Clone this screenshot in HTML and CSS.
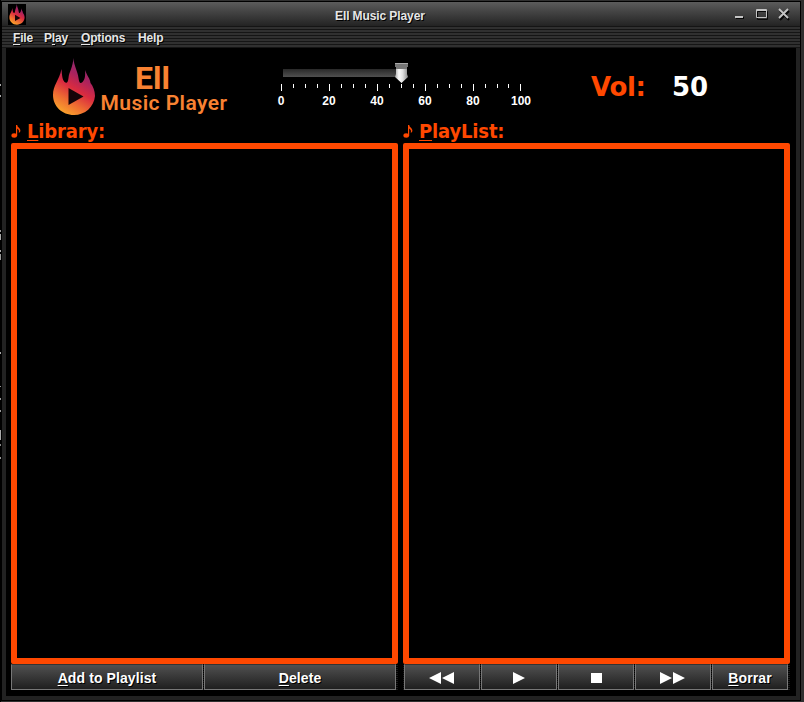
FILE: index.html
```
<!DOCTYPE html>
<html lang="en">
<head>
<meta charset="utf-8">
<title>Ell Music Player</title>
<link rel="stylesheet" href="styles.css">
</head>
<body>
<svg class="defs" width="0" height="0">
  <defs>
    <linearGradient id="fire" x1="0.72" y1="0" x2="0.28" y2="1">
      <stop offset="0" stop-color="#833078"/>
      <stop offset=".3" stop-color="#a8225f"/>
      <stop offset=".53" stop-color="#d92b40"/>
      <stop offset=".76" stop-color="#ee6b32"/>
      <stop offset="1" stop-color="#fba72b"/>
    </linearGradient>
    <symbol id="flame" viewBox="0 0 44 58">
      <path fill="url(#fire)" d="M21.400 0C22 8 26 14 26.500 20C27 24 28 26 30 24.500C33 22 33.500 18 33 12C35 18 38 20 38.500 25C41 28 43 33 43 38C42 49 33 57 22 57C10 57 1 48 1 37C1 27 7 23 9.500 11C10 16 10 21 12.500 24C15 26 16 24 16.500 20C17 14 21 9 21.400 0Z"/>
      <path fill="#160408" d="M16.500 30L31.500 38.500L16.500 47Z"/>
    </symbol>
  </defs>
</svg>
<div class="window">
  <header class="titlebar">
    <span class="app-icon"><svg width="16" height="21" preserveAspectRatio="none"><use href="#flame"/></svg></span>
    <h1 class="title">Ell Music Player</h1>
    <svg class="controls" width="58" height="14" fill="none">
      <g stroke="#080808" transform="translate(1 1)"><path stroke-width="2" d="M2 10h8"/><path d="M23.500 3.500h10v8h-10z"/><path stroke-width="2" d="M46 3l9 9M55 3l-9 9"/></g>
      <g stroke="#c4c4c4"><path stroke-width="2" d="M2 10h8"/><path d="M23.500 2.500h10v8h-10zM24 3.500h9"/><path stroke-width="1.800" d="M46 2l9 9M55 2l-9 9"/></g>
    </svg>
  </header>
  <nav class="menubar">
    <span class="m-file"><u>F</u>ile</span><span class="m-play">P<u>l</u>ay</span><span class="m-options"><u>O</u>ptions</span><span class="m-help">Help</span>
  </nav>
  <main class="content">
    <section class="top">
      <svg class="logo" width="44" height="58"><use href="#flame"/></svg>
      <div class="brand"><div class="brand-name">Ell</div><div class="brand-sub">Music Player</div></div>
      <div class="slider">
        <svg width="260" height="34">
          <defs>
            <linearGradient id="track" x2="0" y2="1"><stop stop-color="#292929"/><stop offset="1" stop-color="#505050"/></linearGradient>
            <linearGradient id="thumb"><stop stop-color="#aaa"/><stop offset=".3" stop-color="#fafafa"/><stop offset=".6" stop-color="#dedede"/><stop offset="1" stop-color="#888"/></linearGradient>
          </defs>
          <rect x="13" y="7" width="115" height="8" fill="url(#track)"/>
          <path fill="url(#thumb)" d="M126 5h11v7l1 3-6.500 6-6.500-6 1-3z"/>
          <path fill="#777" d="M125 1h13v4h-1v2h-11v-2h-1z"/><path stroke="#aaa" d="M125 1.500h13"/>
          <path stroke="#fff" d="M11.500 22v7M59.500 22v7M107.500 22v7M155.500 22v7M203.500 22v7M250.500 22v7M23.500 22v4M35.500 22v4M47.500 22v4M71.500 22v4M83.500 22v4M95.500 22v4M119.500 22v4M131.500 22v4M143.500 22v4M167.500 22v4M179.500 22v4M191.500 22v4M215.500 22v4M227.500 22v4M238.500 22v4"/>
        </svg>
        <div class="scale"><span>0</span><span>20</span><span>40</span><span>60</span><span>80</span><span>100</span></div>
      </div>
      <div class="volume"><span class="vol-label">Vol:</span><span class="vol-value">50</span></div>
    </section>
    <section class="panels">
      <div class="panel">
        <h2><svg class="note" width="16" height="18"><ellipse cx="3.200" cy="13.500" rx="2.800" ry="2.200"/><path d="M5 3h1.200q.2 2 2 3 2.200 2.500.4 4.500h-1q1.200-2.200-1.400-4v7.500h-1.200z"/></svg><span><u>L</u>ibrary:</span></h2>
        <div class="list"></div>
        <div class="buttons"><button><span><u>A</u>dd to Playlist</span></button><button><span><u>D</u>elete</span></button></div>
      </div>
      <div class="panel right">
        <h2><svg class="note" width="16" height="18"><ellipse cx="3.200" cy="13.500" rx="2.800" ry="2.200"/><path d="M5 3h1.200q.2 2 2 3 2.200 2.500.4 4.500h-1q1.200-2.200-1.400-4v7.500h-1.200z"/></svg><span><u>P</u>layList:</span></h2>
        <div class="list"></div>
        <div class="buttons">
          <button aria-label="Previous"><svg width="26" height="12"><path d="M0 6L12 0v12zM13 6L25 0v12z"/></svg></button>
          <button aria-label="Play"><svg width="12" height="12"><path d="M0 0l12 6-12 6z"/></svg></button>
          <button aria-label="Stop"><svg width="11" height="12"><path d="M0 1h11v10H0z"/></svg></button>
          <button aria-label="Next"><svg width="26" height="12"><path d="M0 0l12 6-12 6zM13 0l12 6-12 6z"/></svg></button>
          <button><span><u>B</u>orrar</span></button>
        </div>
      </div>
    </section>
  </main>
</div>
</body>
</html>
```
FILE: styles.css
```
* { box-sizing: border-box; margin: 0; padding: 0; }
body {
  width: 804px; height: 702px; overflow: hidden;
  padding: 1px 3px 1px 1px;
  background:
    linear-gradient(#000 84px, #aaa 0 86px, #000 0 95px, #aaa 0 97px, #000 0 230px, #999 0 232px, #000 0 234px, #aaa 0 240px, #000 0 250px, #aaa 0 252px, #000 0 254px, #999 0 260px, #000 0 352px, #aaa 0 354px, #000 0 386px, #999 0 387px, #000 0 398px, #999 0 400px, #000 0 410px, #999 0 412px, #000 0 430px, #aaa 0 440px, #000 0 444px, #888 0 446px, #000 0 457px, #999 0 459px, #000 0) 0 0 / 1px 100% no-repeat,
    #303030;
  font: bold 12px "Liberation Sans", Arial, sans-serif; color: #e6e6e6;
}
.defs { position: absolute; }
.window {
  width: 800px; height: 700px;
  display: flex; flex-direction: column;
  border: 1px solid #000; background: #222;
}
.titlebar {
  height: 24px; flex: none; display: flex; align-items: center;
  background: linear-gradient(#5c5c5c, #444 40%, #232323);
  padding: 0 9px 0 6px;
}
.app-icon { width: 18px; height: 21px; background: #000; display: flex; justify-content: center; }
.title { flex: 1; padding-left: 309px; font-size: 12px; line-height: 24px; margin-top: 3px; letter-spacing: -.1px; text-shadow: 1px 1px #000; }
.menubar {
  height: 22px; flex: none; display: flex; padding: 1px 0 0 11px; line-height: 22px; letter-spacing: -.15px;
  background: repeating-linear-gradient(#151515 0 1px, #303030 1px 3px);
  text-shadow: 1px 1px #000;
}
.m-file { width: 31px; }
.m-play { width: 37px; }
.m-options { width: 57px; }
u { text-underline-offset: 2px; text-decoration-thickness: 1px; }
.content {
  width: 790px; height: 648px; margin-left: 4px; background: #000;
  display: flex; flex-direction: column;
}
.top { height: 72px; display: flex; }
.logo { margin: 10px 0 0 46px; }
.brand {
  width: 132px; margin: 16px 0 0 2px;
  color: #f98232; font-family: Roboto, sans-serif; text-align: center; white-space: nowrap;
}
.brand-name { font-size: 32px; line-height: 29px; font-weight: 700; padding-right: 23px; }
.brand-sub { font-size: 21px; line-height: 21px; font-weight: 600; letter-spacing: .45px; }
.slider { width: 260px; margin: 14px 0 0 40px; }
.slider svg { display: block; }
.scale { display: flex; color: #fff; line-height: 12px; margin: -1px 0 0 -13px; }
.scale span { width: 48px; text-align: center; flex: none; }
.volume { display: flex; font: bold 26px/32px "DejaVu Sans", sans-serif; margin: 23px 0 0 61px; }
.vol-label { width: 81px; color: #ff4800; letter-spacing: -.3px; }
.vol-value { color: #fff; }
.panels { display: flex; gap: 5px; padding-left: 5px; }
.panel { width: 387px; }
.panel h2 {
  height: 23px; display: flex; color: #ff4800;
  font: bold 20px/22px "DejaVu Sans Condensed", "DejaVu Sans", sans-serif; letter-spacing: -.15px;
}
.note { fill: #ff4800; margin-top: 2px; }
.list { height: 521px; border: 6px solid #ff4800; border-radius: 2px; }
.buttons {
  display: flex; gap: 1px; height: 26px; width: 387px;
  background: repeating-linear-gradient(#000 0 1px, #1c1c1c 1px 2px);
}
.right .buttons { padding-left: 1px; }
button {
  width: 192px; height: 26px; display: flex; align-items: center; justify-content: center;
  border: 1px solid #777; border-top-color: #333;
  background: linear-gradient(#505050, #1f1f1f);
  color: #fff; font: bold 14px "Liberation Sans", Arial, sans-serif; text-shadow: 1px 1px #000;
}
.right button { width: 76px; }
button svg { fill: #fff; margin-top: 1px; }
button span { padding-top: 1px; letter-spacing: .1px; }
```
